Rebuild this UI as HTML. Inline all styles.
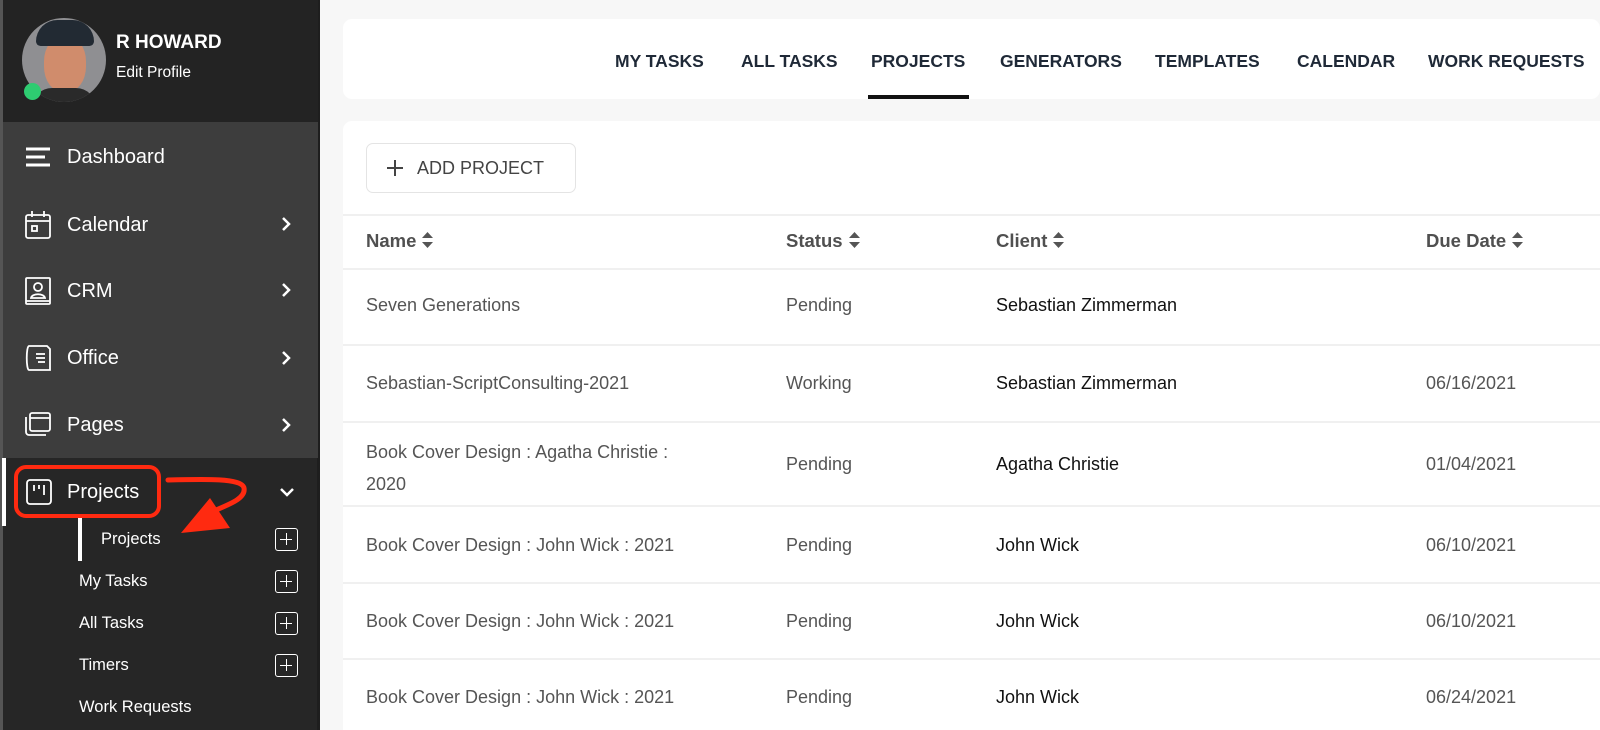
<!DOCTYPE html>
<html style="width:1600px;height:730px;overflow:hidden"><head><meta charset="utf-8"><style>
*{box-sizing:border-box;margin:0;padding:0}
body{width:1600px;height:730px;overflow:hidden;background:#f7f7f7;font-family:"Liberation Sans",sans-serif;position:relative}
.abs{position:absolute}
.side{left:0;top:0;width:320px;height:730px;background:#262626;border-right:3px solid #1e1e1e}
.hdr{left:0;top:0;width:318px;height:122px;background:#232323}
.menu{left:0;top:122px;width:318px;height:336px;background:#3d3d3d}
.mi{position:absolute;left:67px;color:#fff;font-size:20px;line-height:24px}
.ic{position:absolute;left:25px}
.chev{position:absolute;left:280px}
.sub{position:absolute;color:#fff;font-size:16.5px;line-height:20px}
.plus{position:absolute;left:275px;width:23px;height:23px;border:1.5px solid #fff;border-radius:3px}
.plus:before{content:"";position:absolute;left:4px;top:9.5px;width:12px;height:1.5px;background:#fff}
.plus:after{content:"";position:absolute;left:9.5px;top:4px;width:1.5px;height:12px;background:#fff}
.card{background:#fff;border-radius:9px;left:343px;width:1257px}
.nav{position:absolute;top:50px;font-size:17.5px;font-weight:bold;color:#1f2937;line-height:22px}
.th{position:absolute;top:229px;font-size:18.5px;font-weight:bold;color:#505050;line-height:24px}
.th svg{vertical-align:-2px;margin-left:5px}
.line{position:absolute;left:343px;width:1257px;height:2px;background:#f0f0f0}
.td{position:absolute;font-size:18px;color:#555;line-height:24px}
.cl{color:#111}
</style></head><body>
<div class="abs side"></div>
<div class="abs hdr"></div>
<div class="abs menu"></div>
<div class="abs" style="left:0;top:0;width:3px;height:730px;background:#555"></div>
<div class="abs" style="left:2px;top:458px;width:4px;height:68px;background:#fff"></div>
<div class="abs" style="left:22px;top:18px;width:84px;height:84px;border-radius:50%;background:#8f8f92;overflow:hidden">
<div style="position:absolute;left:22px;top:18px;width:42px;height:56px;background:#d08c6c;border-radius:45%"></div>
<div style="position:absolute;left:14px;top:2px;width:58px;height:26px;background:#222a33;border-radius:28px 28px 6px 6px"></div>
<div style="position:absolute;left:10px;top:70px;width:64px;height:20px;background:#2a2a2a;border-radius:30px 30px 0 0"></div></div>
<div class="abs" style="left:24px;top:83px;width:17px;height:17px;border-radius:50%;background:#2ecc71"></div>
<div class="abs" style="left:116px;top:32px;color:#fff;font-size:19px;font-weight:bold">R HOWARD</div>
<div class="abs" style="left:116px;top:64px;color:#fff;font-size:15.5px">Edit Profile</div>
<svg class="ic" style="top:146px" width="26" height="22"><g stroke="#fff" stroke-width="3"><line x1="1" y1="3" x2="25" y2="3"/><line x1="1" y1="11" x2="20" y2="11"/><line x1="1" y1="19" x2="25" y2="19"/></g></svg>
<div class="mi" style="top:145px">Dashboard</div>
<svg class="ic" style="top:210px" width="26" height="30" fill="none" stroke="#fff" stroke-width="1.8"><rect x="1" y="5" width="24" height="23" rx="2"/><line x1="1" y1="11" x2="25" y2="11"/><line x1="7" y1="1" x2="7" y2="7"/><line x1="19" y1="1" x2="19" y2="7"/><rect x="7" y="16" width="5" height="5"/></svg>
<div class="mi" style="top:213px">Calendar</div>
<svg class="ic" style="top:277px" width="26" height="29" fill="none" stroke="#fff" stroke-width="1.8"><rect x="1" y="1" width="24" height="26" rx="1"/><circle cx="13" cy="10" r="4"/><path d="M6 21c1-5 13-5 14 0z"/><line x1="1" y1="24" x2="25" y2="24"/></svg>
<div class="mi" style="top:279px">CRM</div>
<svg class="ic" style="top:344px" width="26" height="28" fill="none" stroke="#fff" stroke-width="1.8"><path d="M4 2h18l3 3v21H8"/><path d="M4 2c-3 0-3 24 0 24h4"/><line x1="11" y1="10" x2="20" y2="10"/><line x1="11" y1="14" x2="20" y2="14"/><line x1="13" y1="18" x2="20" y2="18"/></svg>
<div class="mi" style="top:346px">Office</div>
<svg class="ic" style="top:412px" width="26" height="24" fill="none" stroke="#fff" stroke-width="1.8"><rect x="5" y="1" width="20" height="18" rx="2"/><line x1="5" y1="6" x2="25" y2="6"/><path d="M1 5v15a3 3 0 0 0 3 3h17"/></svg>
<div class="mi" style="top:413px">Pages</div>
<svg class="chev" style="top:216px" width="12" height="16" fill="none" stroke="#fff" stroke-width="2.5"><path d="M3 2l6 6-6 6"/></svg>
<svg class="chev" style="top:282px" width="12" height="16" fill="none" stroke="#fff" stroke-width="2.5"><path d="M3 2l6 6-6 6"/></svg>
<svg class="chev" style="top:350px" width="12" height="16" fill="none" stroke="#fff" stroke-width="2.5"><path d="M3 2l6 6-6 6"/></svg>
<svg class="chev" style="top:417px" width="12" height="16" fill="none" stroke="#fff" stroke-width="2.5"><path d="M3 2l6 6-6 6"/></svg>
<svg class="abs" style="left:279px;top:486px" width="16" height="12" fill="none" stroke="#fff" stroke-width="2.5"><path d="M2 3l6 6 6-6"/></svg>
<div class="abs" style="left:14px;top:465px;width:147px;height:53px;border:4px solid #ff2a10;border-radius:12px"></div>
<svg class="abs" style="left:26px;top:479px" width="26" height="26" fill="none" stroke="#fff" stroke-width="1.8"><rect x="1" y="1" width="24" height="24" rx="3"/><line x1="8" y1="6" x2="8" y2="12"/><line x1="13" y1="6" x2="13" y2="10"/><line x1="18" y1="6" x2="18" y2="16"/></svg>
<div class="mi" style="top:480px">Projects</div>
<svg class="abs" style="left:160px;top:470px" width="100" height="72"><path d="M8 10 C45 9 82 8 84 18 C86 28 70 34 56 40" fill="none" stroke="#ff2a10" stroke-width="5" stroke-linecap="round"/><path d="M21 63 L50 28 L70 58 Z" fill="#ff2a10"/></svg>
<div class="abs" style="left:78px;top:518px;width:4px;height:43px;background:#fff"></div>
<div class="sub" style="left:101px;top:529px">Projects</div><div class="plus" style="top:528px"></div>
<div class="sub" style="left:79px;top:571px">My Tasks</div><div class="plus" style="top:570px"></div>
<div class="sub" style="left:79px;top:613px">All Tasks</div><div class="plus" style="top:612px"></div>
<div class="sub" style="left:79px;top:655px">Timers</div><div class="plus" style="top:654px"></div>
<div class="sub" style="left:79px;top:697px">Work Requests</div>
<div class="abs card" style="top:19px;height:80px"></div>
<div class="nav" style="left:615px">MY TASKS</div>
<div class="nav" style="left:741px">ALL TASKS</div>
<div class="nav" style="left:871px">PROJECTS</div>
<div class="nav" style="left:1000px">GENERATORS</div>
<div class="nav" style="left:1155px">TEMPLATES</div>
<div class="nav" style="left:1297px">CALENDAR</div>
<div class="nav" style="left:1428px">WORK REQUESTS</div>
<div class="abs" style="left:868px;top:95px;width:101px;height:4px;background:#111"></div>
<div class="abs card" style="top:121px;height:609px;border-radius:9px 0 0 0"></div>
<div class="abs" style="left:366px;top:143px;width:210px;height:50px;border:1.5px solid #e4e4e4;border-radius:7px"></div>
<svg class="abs" style="left:386px;top:159px" width="18" height="18" stroke="#444" stroke-width="2"><line x1="9" y1="1" x2="9" y2="17"/><line x1="1" y1="9" x2="17" y2="9"/></svg>
<div class="abs" style="left:417px;top:157px;font-size:18px;color:#444;line-height:22px">ADD PROJECT</div>
<div class="line" style="top:214px"></div>
<div class="th" style="left:366px">Name<svg width="13" height="18"><path d="M1 7L6.5 1 12 7zM1 11l5.5 6 5.5-6z" fill="#555"/></svg></div>
<div class="th" style="left:786px">Status<svg width="13" height="18"><path d="M1 7L6.5 1 12 7zM1 11l5.5 6 5.5-6z" fill="#555"/></svg></div>
<div class="th" style="left:996px">Client<svg width="13" height="18"><path d="M1 7L6.5 1 12 7zM1 11l5.5 6 5.5-6z" fill="#555"/></svg></div>
<div class="th" style="left:1426px">Due Date<svg width="13" height="18"><path d="M1 7L6.5 1 12 7zM1 11l5.5 6 5.5-6z" fill="#555"/></svg></div>
<div class="line" style="top:268px"></div>
<div class="td" style="left:366px;top:293px">Seven Generations</div><div class="td" style="left:786px;top:293px">Pending</div><div class="td cl" style="left:996px;top:293px">Sebastian Zimmerman</div>
<div class="line" style="top:344px"></div>
<div class="td" style="left:366px;top:371px">Sebastian-ScriptConsulting-2021</div><div class="td" style="left:786px;top:371px">Working</div><div class="td cl" style="left:996px;top:371px">Sebastian Zimmerman</div><div class="td" style="left:1426px;top:371px">06/16/2021</div>
<div class="line" style="top:421px"></div>
<div class="td" style="left:366px;top:436px;line-height:32px">Book Cover Design : Agatha Christie :<br>2020</div><div class="td" style="left:786px;top:452px">Pending</div><div class="td cl" style="left:996px;top:452px">Agatha Christie</div><div class="td" style="left:1426px;top:452px">01/04/2021</div>
<div class="line" style="top:505px"></div>
<div class="td" style="left:366px;top:533px">Book Cover Design : John Wick : 2021</div><div class="td" style="left:786px;top:533px">Pending</div><div class="td cl" style="left:996px;top:533px">John Wick</div><div class="td" style="left:1426px;top:533px">06/10/2021</div>
<div class="line" style="top:582px"></div>
<div class="td" style="left:366px;top:609px">Book Cover Design : John Wick : 2021</div><div class="td" style="left:786px;top:609px">Pending</div><div class="td cl" style="left:996px;top:609px">John Wick</div><div class="td" style="left:1426px;top:609px">06/10/2021</div>
<div class="line" style="top:658px"></div>
<div class="td" style="left:366px;top:685px">Book Cover Design : John Wick : 2021</div><div class="td" style="left:786px;top:685px">Pending</div><div class="td cl" style="left:996px;top:685px">John Wick</div><div class="td" style="left:1426px;top:685px">06/24/2021</div>
</body></html>
